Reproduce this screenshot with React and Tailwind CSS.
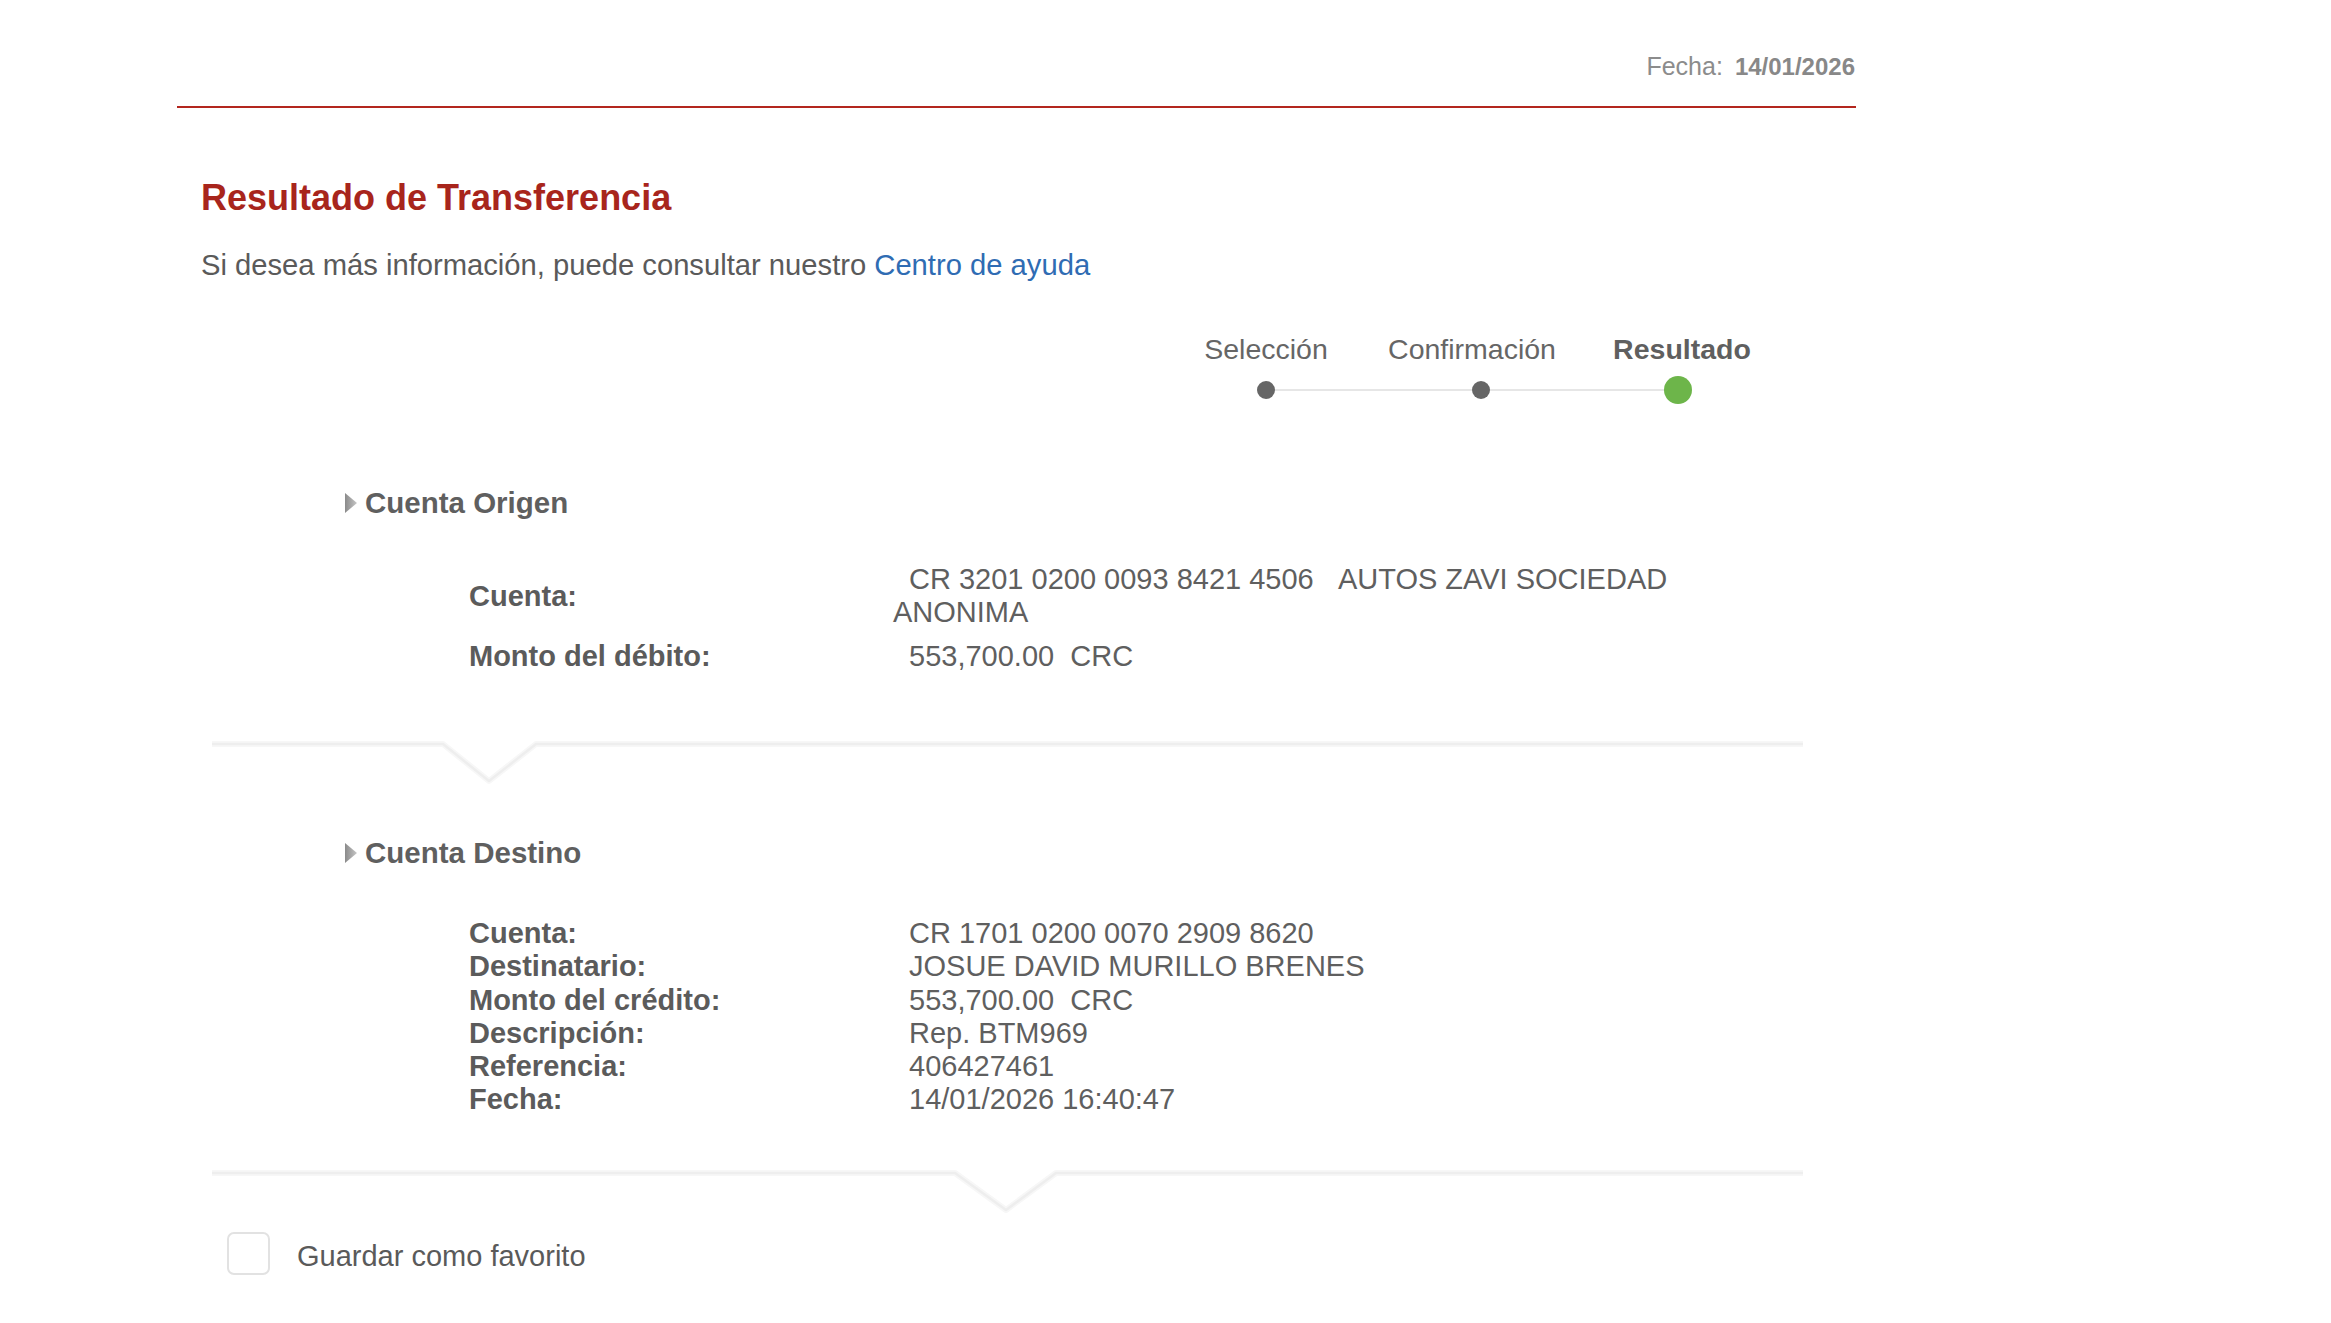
import React from "react";

// Result page of a bank transfer: header date, stepper, origin / destination blocks.

const LABEL = "font-bold text-[#5b5b5b]";
const VALUE = "text-[#5f5f5f]";

function Caret() {
  return (
    <svg width="12" height="20" viewBox="0 0 12 20" className="shrink-0">
      <defs>
        <linearGradient id="caretGrad" x1="0" y1="0" x2="1" y2="0">
          <stop offset="0" stopColor="#8a8a8a" />
          <stop offset="1" stopColor="#c6c6c6" />
        </linearGradient>
      </defs>
      <polygon points="0,0 12,10 0,20" fill="url(#caretGrad)" />
    </svg>
  );
}

function SectionTitle({ children }) {
  return (
    <div className="flex items-center gap-[8px] pl-[168px] text-[29.5px] leading-[34px] font-bold text-[#5f5f5f]">
      <Caret />
      <span>{children}</span>
    </div>
  );
}

// Light bottom edge of a panel, with a V notch pointing down.
function Divider({ left, apex, right }) {
  const y = 3;
  const d = 37;
  const pts = `0,${y} ${left},${y} ${apex},${y + d} ${right},${y} 1591,${y}`;
  return (
    <svg width="1591" height="44" viewBox="0 0 1591 44" className="ml-[35px] block">
      <polyline points={pts} fill="none" stroke="#f7f7f7" strokeWidth="6" strokeLinejoin="round" />
      <polyline points={pts} fill="none" stroke="#eeeeee" strokeWidth="2.5" strokeLinejoin="round" />
    </svg>
  );
}

function Stepper() {
  return (
    <div className="flex flex-col items-end pr-[74px] mt-[50px]">
      <div className="flex text-[28.5px] leading-[34px] text-[#666]">
        <div className="w-[200px] text-center">Selección</div>
        <div className="w-[200px] ml-[6px] text-center">Confirmación</div>
        <div className="w-[200px] ml-[10px] text-center font-bold text-[#5f5f5f]">Resultado</div>
      </div>
      <div className="flex items-center h-[28px] mt-[10px] mr-[90px]">
        <div className="w-[18px] h-[18px] rounded-full bg-[#666]" />
        <div className="w-[197px] h-[2px] bg-[#e6e6e6]" />
        <div className="w-[18px] h-[18px] rounded-full bg-[#666]" />
        <div className="w-[174px] h-[2px] bg-[#e6e6e6]" />
        <div className="w-[28px] h-[28px] rounded-full bg-[#6db54a]" />
      </div>
    </div>
  );
}

const destino = [
  ["Cuenta:", "CR 1701 0200 0070 2909 8620"],
  ["Destinatario:", "JOSUE DAVID MURILLO BRENES"],
  ["Monto del crédito:", "553,700.00\u00a0\u00a0CRC"],
  ["Descripción:", "Rep. BTM969"],
  ["Referencia:", "406427461"],
  ["Fecha:", "14/01/2026 16:40:47"],
];

export default function App() {
  return (
    <div className="min-h-screen bg-white font-['Liberation_Sans',Arial,sans-serif]">
      <div className="ml-[177px] w-[1679px]">
        {/* Header */}
        <div className="flex justify-end items-baseline pt-[52px] pb-[25px] border-b-2 border-[#b3261e] leading-[28px] text-[#8c8c8c]">
          <span className="text-[25px]">Fecha:</span>
          <span className="ml-[12px] mr-[1px] text-[24px] font-bold text-[#888]">14/01/2026</span>
        </div>

        <div className="pl-[24px]">
          <h1 className="mt-[69px] text-[36px] leading-[42px] font-bold text-[#a8251c]">
            Resultado de Transferencia
          </h1>
          <p className="mt-[29px] text-[29.2px] leading-[34px] text-[#5a5a5a]">
            Si desea más información, puede consultar nuestro{" "}
            <a className="text-[#2f6cb3]">Centro de ayuda</a>
          </p>
        </div>

        <Stepper />

        {/* Cuenta Origen */}
        <div className="mt-[82px]">
          <SectionTitle>Cuenta Origen</SectionTitle>
          <div className="mt-[43px] pl-[292px] grid grid-cols-[424px_800px] gap-y-[11px] text-[29px] leading-[33px]">
            <div className={`${LABEL} self-center`}>Cuenta:</div>
            <div className={`${VALUE} indent-[16px]`}>
              CR 3201 0200 0093 8421 4506{"\u00a0\u00a0\u00a0"}AUTOS ZAVI SOCIEDAD ANONIMA
            </div>
            <div className={LABEL}>Monto del débito:</div>
            <div className={`${VALUE} pl-[16px]`}>553,700.00{"\u00a0\u00a0"}CRC</div>
          </div>
        </div>

        <div className="mt-[68px]">
          <Divider left={231} apex={277} right={324} />
        </div>

        {/* Cuenta Destino */}
        <div className="mt-[51px]">
          <SectionTitle>Cuenta Destino</SectionTitle>
          <div className="mt-[47px] pl-[292px] grid grid-cols-[440px_800px] text-[29px] leading-[33.3px]">
            {destino.map(([k, v]) => (
              <React.Fragment key={k}>
                <div className={LABEL}>{k}</div>
                <div className={VALUE}>{v}</div>
              </React.Fragment>
            ))}
          </div>
        </div>

        <div className="mt-[53px]">
          <Divider left={743} apex={794} right={844} />
        </div>

        {/* Favorito */}
        <label className="mt-[18px] ml-[50px] flex items-center gap-[27px]">
          <span className="w-[43px] h-[43px] rounded-[7px] border-2 border-[#e2e2e2] bg-white" />
          <span className="text-[29px] leading-[34px] text-[#5a5a5a] mt-[5px]">Guardar como favorito</span>
        </label>
      </div>
    </div>
  );
}
